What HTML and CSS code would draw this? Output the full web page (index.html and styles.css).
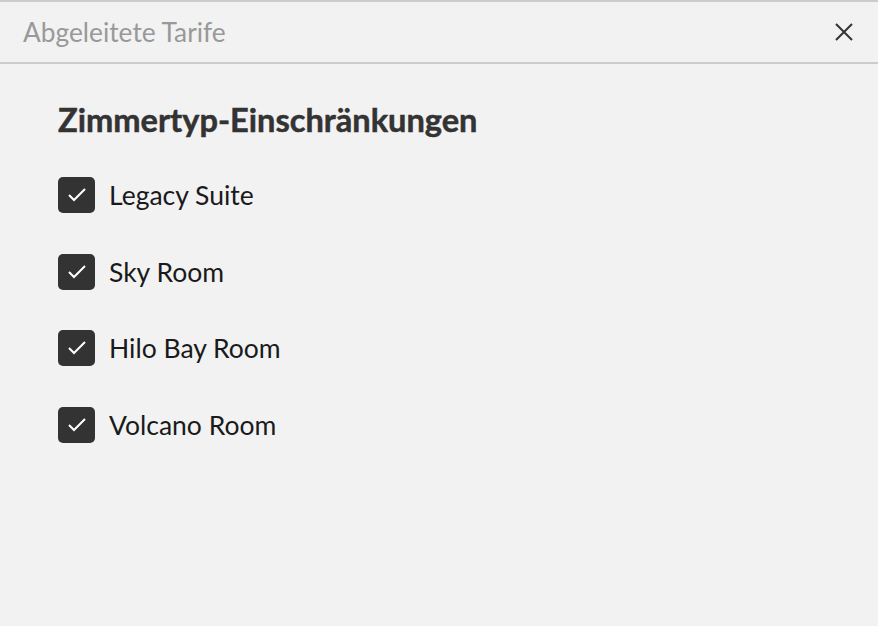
FILE: index.html
```html
<!DOCTYPE html>
<html lang="de">

<head>
    <meta charset="UTF-8">
    <meta name="viewport" content="width=device-width, initial-scale=1.0">
    <title>Abgeleitete Tarife</title>
    <link rel="stylesheet" href="styles.css">
</head>

<body>
    <div class="dialog">
        <div class="dialog-header">
            <h1 class="dialog-title">Abgeleitete Tarife</h1>
            <button class="close-button" aria-label="Schließen">
                <svg width="20" height="20" viewBox="0 0 20 20">
                    <path d="M2 2 L18 18 M18 2 L2 18" stroke="#333" stroke-width="2" fill="none"/>
                </svg>
            </button>
        </div>

        <div class="dialog-body">
            <h2 class="section-title">Zimmertyp-Einschränkungen</h2>

            <ul class="room-list">
                <li class="room-item">
                    <span class="checkbox"><svg width="36" height="36" viewBox="0 0 36 36"><path d="M10 18 L15 23 L26 12" stroke="#fff" stroke-width="2" fill="none"/></svg></span>
                    <span class="room-label">Legacy Suite</span>
                </li>
                <li class="room-item">
                    <span class="checkbox"><svg width="36" height="36" viewBox="0 0 36 36"><path d="M10 18 L15 23 L26 12" stroke="#fff" stroke-width="2" fill="none"/></svg></span>
                    <span class="room-label">Sky Room</span>
                </li>
                <li class="room-item">
                    <span class="checkbox"><svg width="36" height="36" viewBox="0 0 36 36"><path d="M10 18 L15 23 L26 12" stroke="#fff" stroke-width="2" fill="none"/></svg></span>
                    <span class="room-label">Hilo Bay Room</span>
                </li>
                <li class="room-item">
                    <span class="checkbox"><svg width="36" height="36" viewBox="0 0 36 36"><path d="M10 18 L15 23 L26 12" stroke="#fff" stroke-width="2" fill="none"/></svg></span>
                    <span class="room-label">Volcano Room</span>
                </li>
            </ul>
        </div>
    </div>
</body>

</html>
```

FILE: styles.css
```css
body {
    margin: 0;
    background-color: #f2f2f2;
    font-family: Lato, "Open Sans", sans-serif;
    color: #1a1a1a;
}

.dialog {
    border-top: 2px solid #cccccc;
    min-height: 624px;
}

.dialog-header {
    display: flex;
    justify-content: space-between;
    align-items: center;
    height: 60px;
    padding: 0 24px 0 23px;
    border-bottom: 2px solid #cccccc;
}

.dialog-title {
    margin: 0;
    font-size: 26.3px;
    font-weight: normal;
    color: #999999;
}

.close-button {
    background: none;
    border: none;
    padding: 0;
    display: flex;
    cursor: pointer;
}

.dialog-body {
    padding: 36px 58px;
}

.section-title {
    margin: 0 0 37px;
    font-size: 32.6px;
    line-height: 40px;
    font-weight: bold;
    color: #333333;
    -webkit-text-stroke: 0.5px #333333;
}

.room-list {
    list-style: none;
    margin: 0;
    padding: 0;
    display: flex;
    flex-direction: column;
    gap: 40.7px;
}

.room-item {
    display: flex;
    align-items: center;
    gap: 14px;
    height: 36px;
}

.checkbox {
    width: 37px;
    height: 36px;
    border-radius: 5px;
    background-color: #333333;
    display: flex;
    align-items: center;
    justify-content: center;
}

.room-label {
    font-size: 26.5px;
    line-height: 36px;
}
```
